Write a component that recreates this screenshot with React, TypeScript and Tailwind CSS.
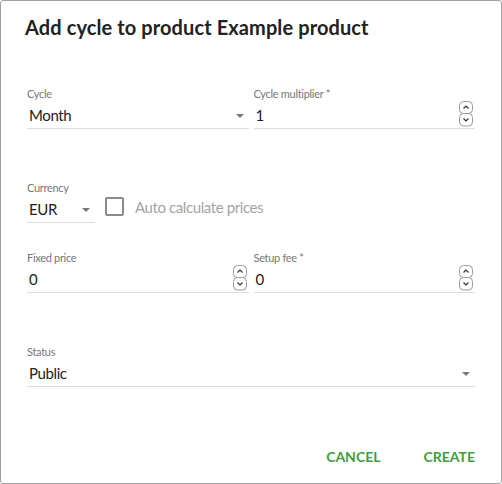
import React from "react";

function Arrow() {
  return (
    <svg width="8" height="4" viewBox="0 0 8 4" className="shrink-0">
      <path d="M0 0 L8 0 L4 4 Z" fill="#777" />
    </svg>
  );
}

function Spinner() {
  return (
    <svg width="14" height="26" viewBox="0 0 14 26" className="shrink-0">
      <rect x="0.5" y="0.5" width="13" height="12" rx="4" fill="white" stroke="#9a9a9a" />
      <rect x="0.5" y="12.5" width="13" height="12.5" rx="4" fill="white" stroke="#9a9a9a" />
      <path d="M4.5 7.5 L7 5 L9.5 7.5" fill="none" stroke="#333" strokeWidth="1.2" />
      <path d="M4.5 17.5 L7 20 L9.5 17.5" fill="none" stroke="#333" strokeWidth="1.2" />
    </svg>
  );
}

function Field({
  label,
  value,
  kind,
  className = "",
}: {
  label: string;
  value: string;
  kind: "select" | "number";
  className?: string;
}) {
  return (
    <div className={"flex flex-col " + className}>
      <div className="text-[11px] leading-[14px] tracking-[-0.3px] text-[#777]">{label}</div>
      <div className="flex h-[28px] items-center border-b border-[#dcdcdc]">
        <span className="mt-[2px] flex-1 pl-[2px] text-[15px] tracking-[-0.4px] text-[#222]">{value}</span>
        {kind === "select" ? (
          <span className="mr-[5px] mt-[2px]">
            <Arrow />
          </span>
        ) : (
          <span className="mr-[2px] mb-[2px]">
            <Spinner />
          </span>
        )}
      </div>
    </div>
  );
}

export default function App() {
  return (
    <div className="h-[484px] w-[502px] rounded-[3px] border border-[#a0a0a0] bg-white font-['Lato',sans-serif]">
      <h1 className="pl-[24px] pt-[12px] text-[20px] font-bold leading-[28px] tracking-[0.1px] text-[#222]">
        Add cycle to product Example product
      </h1>
      <div className="px-[26px]">
        <div className="mt-[46px] grid grid-cols-2 gap-[5px]">
          <Field label="Cycle" value="Month" kind="select" />
          <Field label="Cycle multiplier *" value="1" kind="number" />
        </div>
        <div className="mt-[52px] flex items-end">
          <Field label="Currency" value="EUR" kind="select" className="w-[68px]" />
          <div className="ml-[10px] mb-[5px] flex items-center">
            <div className="h-[19px] w-[19px] rounded-[2px] border-2 border-[#8c8c8c]" />
            <span className="ml-[11px] text-[15px] tracking-[-0.4px] text-[#a3a3a3]">Auto calculate prices</span>
          </div>
        </div>
        <div className="mt-[28px] grid grid-cols-2 gap-[5px]">
          <Field label="Fixed price" value="0" kind="number" />
          <Field label="Setup fee *" value="0" kind="number" />
        </div>
        <div className="mt-[52px]">
          <Field label="Status" value="Public" kind="select" />
        </div>
        <div className="mt-[59px] flex justify-end gap-[43px] text-[14px] font-bold text-[#3f9e3a]">
          <span>CANCEL</span>
          <span>CREATE</span>
        </div>
      </div>
    </div>
  );
}
